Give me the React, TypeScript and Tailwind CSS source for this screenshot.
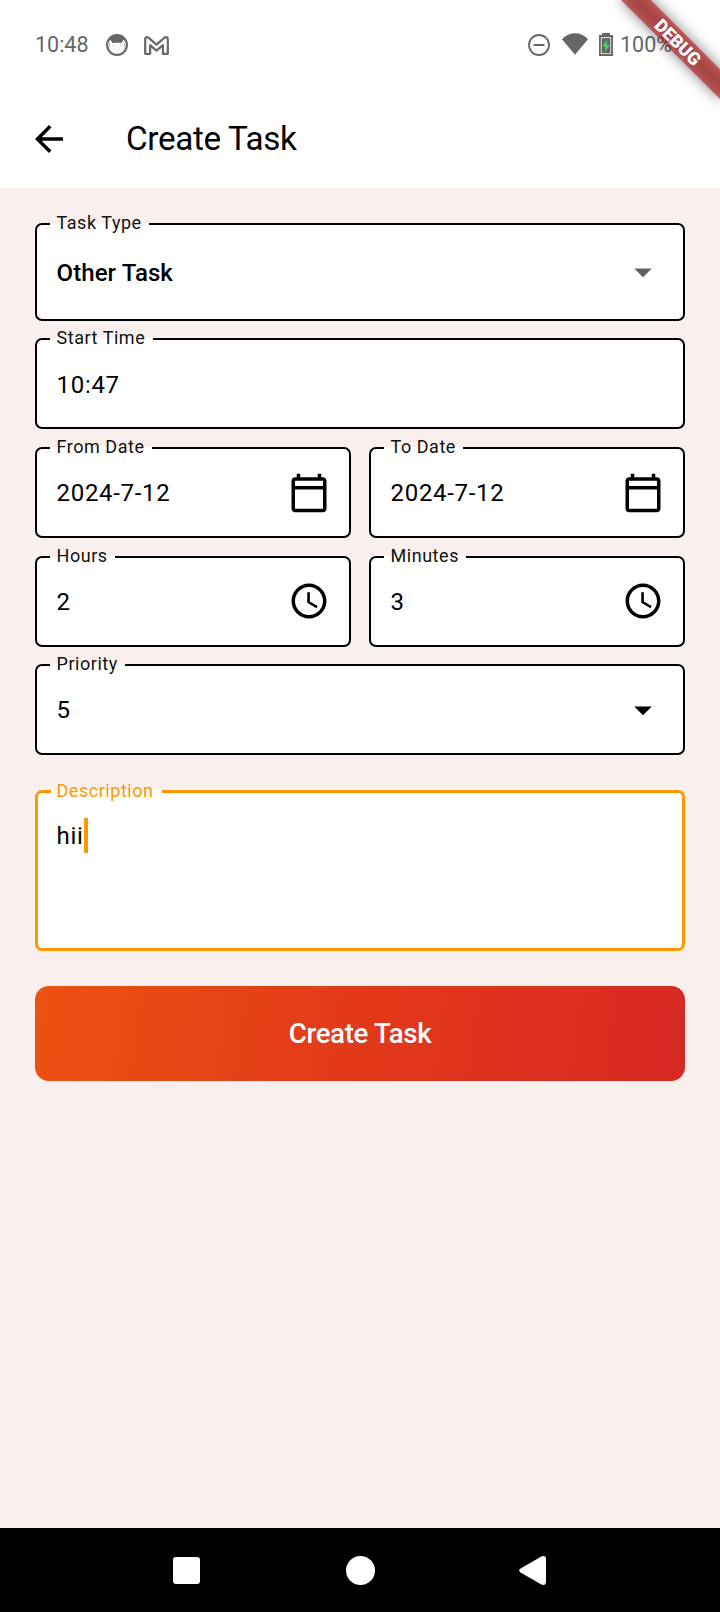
import type { ReactNode } from "react";

const CALENDAR =
  "M20 3h-1V1h-2v2H7V1H5v2H4c-1.1 0-2 .9-2 2v16c0 1.1.9 2 2 2h16c1.1 0 2-.9 2-2V5c0-1.1-.9-2-2-2zm0 18H4V10h16v11zm0-13H4V5h16v3z";
const CLOCK =
  "M11.99 2C6.47 2 2 6.48 2 12s4.47 10 9.99 10C17.52 22 22 17.52 22 12S17.52 2 11.99 2zM12 20c-4.42 0-8-3.58-8-8s3.58-8 8-8 8 3.58 8 8-3.58 8-8 8zm.5-13H11v6l5.25 3.15.75-1.23-4.5-2.67z";
const BACK = "M20 11H7.83l5.59-5.59L12 4l-8 8 8 8 1.41-1.41L7.83 13H20v-2z";
const CARET = "M7 10l5 5 5-5z";

function Icon({ d, className = "" }: { d: string; className?: string }) {
  return (
    <svg viewBox="0 0 24 24" className={`h-[42px] w-[42px] shrink-0 fill-current ${className}`}>
      <path d={d} />
    </svg>
  );
}

/* Outlined box whose floating label cuts a notch in the top border. */
function Field({
  label,
  children,
  height = "h-[87px]",
}: {
  label: string;
  children: ReactNode;
  height?: string;
}) {
  return (
    <fieldset className="-mt-[9px] min-w-0 flex-1 rounded-[7px] border-2 border-black bg-white">
      <legend className="ml-[13px] h-5 pr-[7.5px] pl-[6.5px] text-[18px] leading-[18px] tracking-[0.54px] whitespace-nowrap text-[#111]">
        {label}
      </legend>
      <div
        className={`-mt-[8.6px] -mb-[0.4px] flex items-center justify-between pr-[19px] pl-[19.5px] text-[24px] tracking-[0.7px] ${height}`}
      >
        {children}
      </div>
    </fieldset>
  );
}

function StatusBar() {
  return (
    <div className="flex h-[90px] items-center pl-[35px] text-[21.5px] text-[#666]">
      <span className="w-[71px]">10:48</span>
      <svg viewBox="0 0 22 22" className="h-[22px] w-[22px]">
        <circle cx="11" cy="11" r="9.9" fill="#fff" stroke="#6b6b6b" strokeWidth="2.2" />
        <path
          d="M1.8 8C3 -1.6 19 -1.6 20.2 8L17.6 5.8L15.6 9C13 8.5 9 8.5 6.4 9L4.4 5.8z"
          fill="#666"
        />
        <path d="M3.6 8.5v5M18.4 8.5v5" stroke="#bbb" strokeWidth="1" />
        <g fill="#ccc">
          <circle cx="7" cy="11.5" r=".8" />
          <circle cx="15" cy="11.5" r=".8" />
          <circle cx="9" cy="15" r=".6" />
          <circle cx="13" cy="15" r=".6" />
          <circle cx="11" cy="13" r=".6" />
          <circle cx="11" cy="17" r=".6" />
        </g>
      </svg>
      <svg viewBox="0 0 25 19" className="ml-4 h-[19px] w-[25px]">
        <path
          d="M1.2 3.2Q1.2 1.2 3 1.2Q3.9 1.2 4.7 1.9L12.5 8.6L20.3 1.9Q21.1 1.2 22 1.2Q23.8 1.2 23.8 3.2V17.8H18.9V9.2L12.5 14.6L6.1 9.2V17.8H1.2Z"
          fill="none"
          stroke="#6b6b6b"
          strokeWidth="2.3"
          strokeLinejoin="round"
        />
      </svg>
      <svg viewBox="0 0 22 22" className="ml-[359px] h-[22px] w-[22px]">
        <circle cx="11" cy="11" r="10" fill="none" stroke="#666" strokeWidth="1.8" />
        <path d="M5.5 11h11" stroke="#666" strokeWidth="2" />
      </svg>
      <svg viewBox="0 0 26 22" className="-mt-[2px] ml-3 h-[22px] w-[26px]">
        <path d="M0 6.2C7.4-1.6 18.6-1.6 26 6.2L13 21.8z" fill="#666" />
      </svg>
      <svg viewBox="0 0 14 23" className="-mt-[1px] ml-[11px] h-[23px] w-[14px]">
        <path d="M3 0h8v2h3v21H0V2h3z" fill="#666" />
        <rect x="2.3" y="4.6" width="9.4" height="16" fill="none" stroke="#ddd" strokeWidth="1" />
        <path d="M8 6.5L3.5 13.6h3L6 19l4.6-7.2H7.6z" fill="#3ddc68" />
      </svg>
      <span className="ml-[7px]">100%</span>
    </div>
  );
}

function DebugBanner() {
  return (
    <div className="absolute top-0 right-0 h-0 w-0 rotate-45">
      <div className="absolute top-[49px] -left-[70px] h-[21px] w-[140px] bg-black/50 blur-[6.9px]" />
      <div className="absolute top-[49px] -left-[70px] h-[21px] w-[140px] bg-[#b71c1c]/63 text-center text-[17.85px] leading-[21px] font-black text-white">
        DEBUG
      </div>
    </div>
  );
}

export default function App() {
  return (
    <div className="relative flex h-[1612px] w-[720px] flex-col overflow-hidden bg-[#f9f0ed] font-['Roboto',sans-serif] text-black">
      <header className="h-[188px] bg-white">
        <StatusBar />
        <div className="flex h-[98px] items-center pl-[28px]">
          <Icon d={BACK} />
          <h1 className="ml-14 text-[33.25px] tracking-[-0.36px]">Create Task</h1>
        </div>
      </header>

      <main className="flex flex-1 flex-col px-[35px] pt-[35.2px]">
        <div className="flex flex-col gap-[17.6px]">
          <Field label="Task Type" height="h-[93.5px]">
            <span className="pt-[2px] font-medium tracking-[0.1px]">Other Task</span>
            <Icon d={CARET} className="text-[#616161]" />
          </Field>
          <Field label="Start Time">
            <span className="pt-[1px]">10:47</span>
          </Field>
          <div className="flex gap-[18px]">
            <Field label="From Date">
              <span>2024-7-12</span>
              <Icon d={CALENDAR} />
            </Field>
            <Field label="To Date">
              <span>2024-7-12</span>
              <Icon d={CALENDAR} />
            </Field>
          </div>
          <div className="flex gap-[18px]">
            <Field label="Hours">
              <span className="pt-[2px]">2</span>
              <Icon d={CLOCK} />
            </Field>
            <Field label="Minutes">
              <span className="pt-[2px]">3</span>
              <Icon d={CLOCK} />
            </Field>
          </div>
          <Field label="Priority">
            <span>5</span>
            <Icon d={CARET} />
          </Field>
        </div>

        <fieldset className="mt-[26.5px] h-[169.5px] rounded-[7px] border-[3px] border-[#ff9800] bg-white">
          <legend className="ml-[13px] h-5 pr-[8px] pl-[5.5px] text-[18px] leading-[18px] tracking-[0.54px] text-[#ff9800]">
            Description
          </legend>
          <div className="mt-[16.4px] flex h-[35px] items-center pl-[18.5px] text-[24px] tracking-[0.7px]">
            <span className="pt-[1px]">hii</span>
            <span className="ml-[0.5px] h-[35px] w-[3.5px] bg-[#ff9800]" />
          </div>
        </fieldset>

        <button className="mt-[35px] h-[94.5px] rounded-[14px] bg-[linear-gradient(98deg,#ec5212,#e2391a_50%,#d62923)] text-[27.6px] font-medium tracking-[-0.3px] text-white">
          Create Task
        </button>
      </main>

      <nav className="flex h-[84px] items-center bg-black pl-[173px]">
        <div className="h-[27px] w-[27px] rounded-[3px] bg-white" />
        <div className="ml-[146px] h-[29px] w-[29px] rounded-full bg-white" />
        <svg viewBox="0 0 27 29" className="ml-[144px] h-[29px] w-[27px] fill-white">
          <path d="M1.2 12.8L22.3.5Q27 -1 27 3.2V25.8Q27 30 22.3 28.5L1.2 16.2Q-.8 14.5 1.2 12.8z" />
        </svg>
      </nav>

      <DebugBanner />
    </div>
  );
}
